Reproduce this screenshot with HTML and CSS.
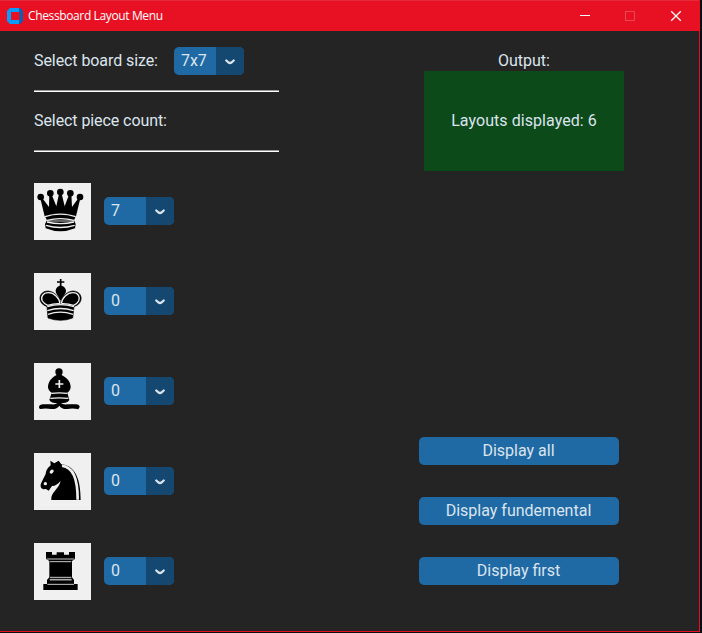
FILE: index.html
```html
<!DOCTYPE html>
<html lang="en">
<head>
<meta charset="utf-8">
<title>Chessboard Layout Menu</title>
<link rel="stylesheet" href="styles.css">
</head>
<body>
<svg class="defs" aria-hidden="true">
  <symbol id="chevron" viewBox="0 0 10 6"><path d="M1.3 1.500 L3.600 3.500 Q5 4.500 6.400 3.500 L8.700 1.500"/></symbol>
</svg>
<div class="window">
  <header class="titlebar">
    <svg class="app-icon" viewBox="0 0 16 16">
      <path fill="#0a9bff" d="M3 0H12V4H4V12H12V16H3L0 13V3Z"/>
      <path fill="#0a5fae" d="M12 0H13L16 3V13L13 16H12V12L12.500 11V5L12 4Z"/>
    </svg>
    <h1 class="title">Chessboard Layout Menu</h1>
    <div class="controls">
      <svg class="control" viewBox="0 0 10 10"><path d="M0 4.500H10"/></svg>
      <svg class="control disabled" viewBox="0 0 10 10"><path d="M.5 .5H9.500V9.500H.5Z"/></svg>
      <svg class="control close" viewBox="0 0 10 10"><path d="M.2 .2L9.800 9.800M9.800 .2L.2 9.800"/></svg>
    </div>
  </header>
  <main class="content">
    <section class="settings">
      <div class="row size"><span class="label">Select board size:</span>
        <div class="select"><span class="value">7x7</span><span class="arrow"><svg><use href="#chevron"/></svg></span></div>
      </div>
      <div class="row count"><span class="label">Select piece count:</span></div>
      <div class="pieces">
        <div class="piece">
          <svg class="figure" viewBox="30 30 171 171">
            <g><circle cx="50" cy="72" r="10"/><circle cx="79" cy="61" r="10"/><circle cx="109" cy="57" r="10"/><circle cx="139" cy="61" r="10"/><circle cx="168" cy="72" r="10"/></g>
            <path d="M48 72L54 74L75 102L76 62H82L97 100L106 58H112L122 100L136 62H142L144 102L164 74L170 72L156 130Q109 112 62 130Z"/>
            <path d="M62 128Q109 112 156 128L150 142L155 153L153 166Q109 184 65 166L63 153L69 142Z"/>
            <path class="line" d="M63 131Q109 116 155 131M69 142Q109 132 150 142M69 147Q109 157 150 147M66 157Q109 170 152 157"/>
            <path class="line fine" d="M70 144H149"/>
          </svg>
          <div class="select"><span class="value">7</span><span class="arrow"><svg><use href="#chevron"/></svg></span></div>
        </div>
        <div class="piece">
          <svg class="figure" viewBox="30 30 171 171">
            <path class="ink cross" d="M110 48V72M99 57H121"/>
            <path d="M110 68C120 68 126 76 126 84C125 94 117 99 112 112H108C104 99 96 94 95 84C95 76 101 68 110 68Z"/>
            <path class="ink" d="M110 124C110 104 128 84 148 84C168 85 177 103 168 118Q164 126 150 131L146 165Q110 179 72 165L69 131Q54 125 50 116C43 99 54 84 72 84C92 85 110 105 110 124Z"/>
            <path class="gap" d="M108 122C106 104 90 89 73 89C57 89 49 103 55 114Q60 122 71 127Q89 121 108 122M112 122C114 104 130 89 147 89C163 89 169 103 164 114Q160 122 149 127Q131 121 112 122"/>
            <path class="line" d="M70 131Q109 119 150 131M70 143Q109 130 149 143M72 154Q109 141 147 154"/>
          </svg>
          <div class="select"><span class="value">0</span><span class="arrow"><svg><use href="#chevron"/></svg></span></div>
        </div>
        <div class="piece">
          <svg class="figure" viewBox="30 30 171 171">
            <circle cx="105" cy="57" r="11"/>
            <path d="M98 66H113C130 75 140 87 140 102Q140 112 130 119L136 141Q130 151 111 151Q115 155 130 154H154Q166 153 167 162L163 169Q148 165 130 168Q113 169 106 158Q99 169 82 168Q63 165 50 168Q43 167 46 158Q50 152 62 154H82Q96 155 100 151Q82 151 76 141L83 119Q72 112 72 102C72 87 82 74 98 66Z"/>
            <path class="line thick" d="M106 81V105M94 93H118"/>
            <path class="line" d="M82 121Q106 118 130 121M79 136Q106 133 133 136"/>
          </svg>
          <div class="select"><span class="value">0</span><span class="arrow"><svg><use href="#chevron"/></svg></span></div>
        </div>
        <div class="piece">
          <svg class="figure" viewBox="30 30 171 171">
            <path d="M79 53L91 61L104 53L112 64C150 68 170 101 170 171H82C79 147 105 139 110 113Q99 128 84 129L74 143L66 138L58 139C49 135 48 127 52 119L65 93C67 79 74 72 80 67Z"/>
            <path class="line mane" d="M114 68C147 73 161 105 161 170"/>
            <ellipse class="light" cx="83" cy="86" rx="7" ry="5" transform="rotate(-45 83 86)"/>
            <circle class="light" cx="64" cy="122" r="5"/>
          </svg>
          <div class="select"><span class="value">0</span><span class="arrow"><svg><use href="#chevron"/></svg></span></div>
        </div>
        <div class="piece">
          <svg class="figure" viewBox="30 30 171 171">
            <path d="M66 57H84V65H98V58H120V65H135V57H153V78L144 84V133L150 141V153H161V171H58V153H69V141L76 133V84L66 78Z"/>
            <path class="line fine" d="M68 78H151M78 86H142M78 133H142M70 154H150"/>
            <path class="line thick soft" d="M77 140H143"/>
          </svg>
          <div class="select"><span class="value">0</span><span class="arrow"><svg><use href="#chevron"/></svg></span></div>
        </div>
      </div>
    </section>
    <section class="results">
      <div class="output"><span>Output:</span><div class="message">Layouts displayed: 6</div></div>
      <div class="actions">
        <button>Display all</button>
        <button>Display fundemental</button>
        <button>Display first</button>
      </div>
    </section>
  </main>
</div>
</body>
</html>
```
FILE: styles.css
```css
* { box-sizing: border-box; }
body {
  margin: 0;
  background: #0b0c12;
  color: #dce4ee;
  font: 16px/20px Roboto, sans-serif;
}
.defs { display: none; }
.window {
  width: 700px;
  height: 632px;
  background: #242424;
  border: solid #e81123;
  border-width: 0 1px 1px 0;
}
.titlebar {
  display: flex;
  align-items: center;
  height: 31px;
  padding-left: 7px;
  background: #e81123;
  border-top: 1px solid #e62a3c;
}
.app-icon { width: 16px; height: 16px; margin-top: -1px; }
.title {
  margin: 0 0 0 5px;
  color: #fff;
  font: 12px/16px "Open Sans", "Noto Sans", sans-serif;
  letter-spacing: -.37px;
}
.controls { display: flex; gap: 35px; margin: -1px 18px 0 auto; }
.control { width: 10px; height: 10px; overflow: visible; fill: none; stroke: #fff; stroke-width: 1; }
.disabled { stroke: #f04553; }
.close { margin-left: 1px; stroke-width: 1.3; }
.content { display: flex; justify-content: space-between; padding: 0 75px 0 34px; }
.settings { width: 245px; }
.row {
  display: flex;
  align-items: center;
  gap: 16px;
  background: linear-gradient(#999 50%, #fff 50%) bottom / 100% 2px no-repeat;
}
.size { height: 61px; padding-bottom: 1px; }
.count { height: 60px; padding-bottom: 2px; }
.label { white-space: nowrap; letter-spacing: -.08px; }
.select {
  display: flex;
  width: 70px;
  height: 28px;
  overflow: hidden;
  border-radius: 5px;
  background: #1f6aa5;
  line-height: 27px;
}
.value { width: 42px; padding-left: 7px; }
.arrow { display: flex; width: 28px; align-items: center; justify-content: center; background: #144870; }
.arrow svg { width: 10px; height: 6px; margin-top: 1px; fill: none; stroke: #dce4ee; stroke-width: 2.3; stroke-linecap: round; }
.pieces { display: grid; gap: 33px; padding-top: 31px; }
.piece { display: flex; gap: 13px; height: 57px; }
.piece .select { margin-top: 14px; }
.figure { width: 57px; height: 57px; background: #f0f0f0; fill: #000; }
.line { fill: none; stroke: #f0f0f0; stroke-width: 4; }
.fine { stroke-width: 2.5; }
.thick { stroke-width: 5; }
.mane { stroke-width: 8; }
.soft { stroke: #aaa; }
.light { fill: #f0f0f0; }
.ink { stroke: #000; stroke-width: 2; }
.cross { stroke-width: 5; }
.gap { stroke: #f0f0f0; stroke-width: 4; }
.results { display: flex; flex-direction: column; justify-content: space-between; width: 205px; height: 554px; padding-top: 20px; }
.output { width: 200px; margin-left: 5px; text-align: center; }
.message { height: 100px; background: #0c4a1a; line-height: 100px; letter-spacing: .06px; }
.actions { display: grid; gap: 32px; width: 200px; }
button { height: 28px; padding: 0 1px 1px 0; border: 0; border-radius: 5px; background: #1f6aa5; color: inherit; font: inherit; }
```
